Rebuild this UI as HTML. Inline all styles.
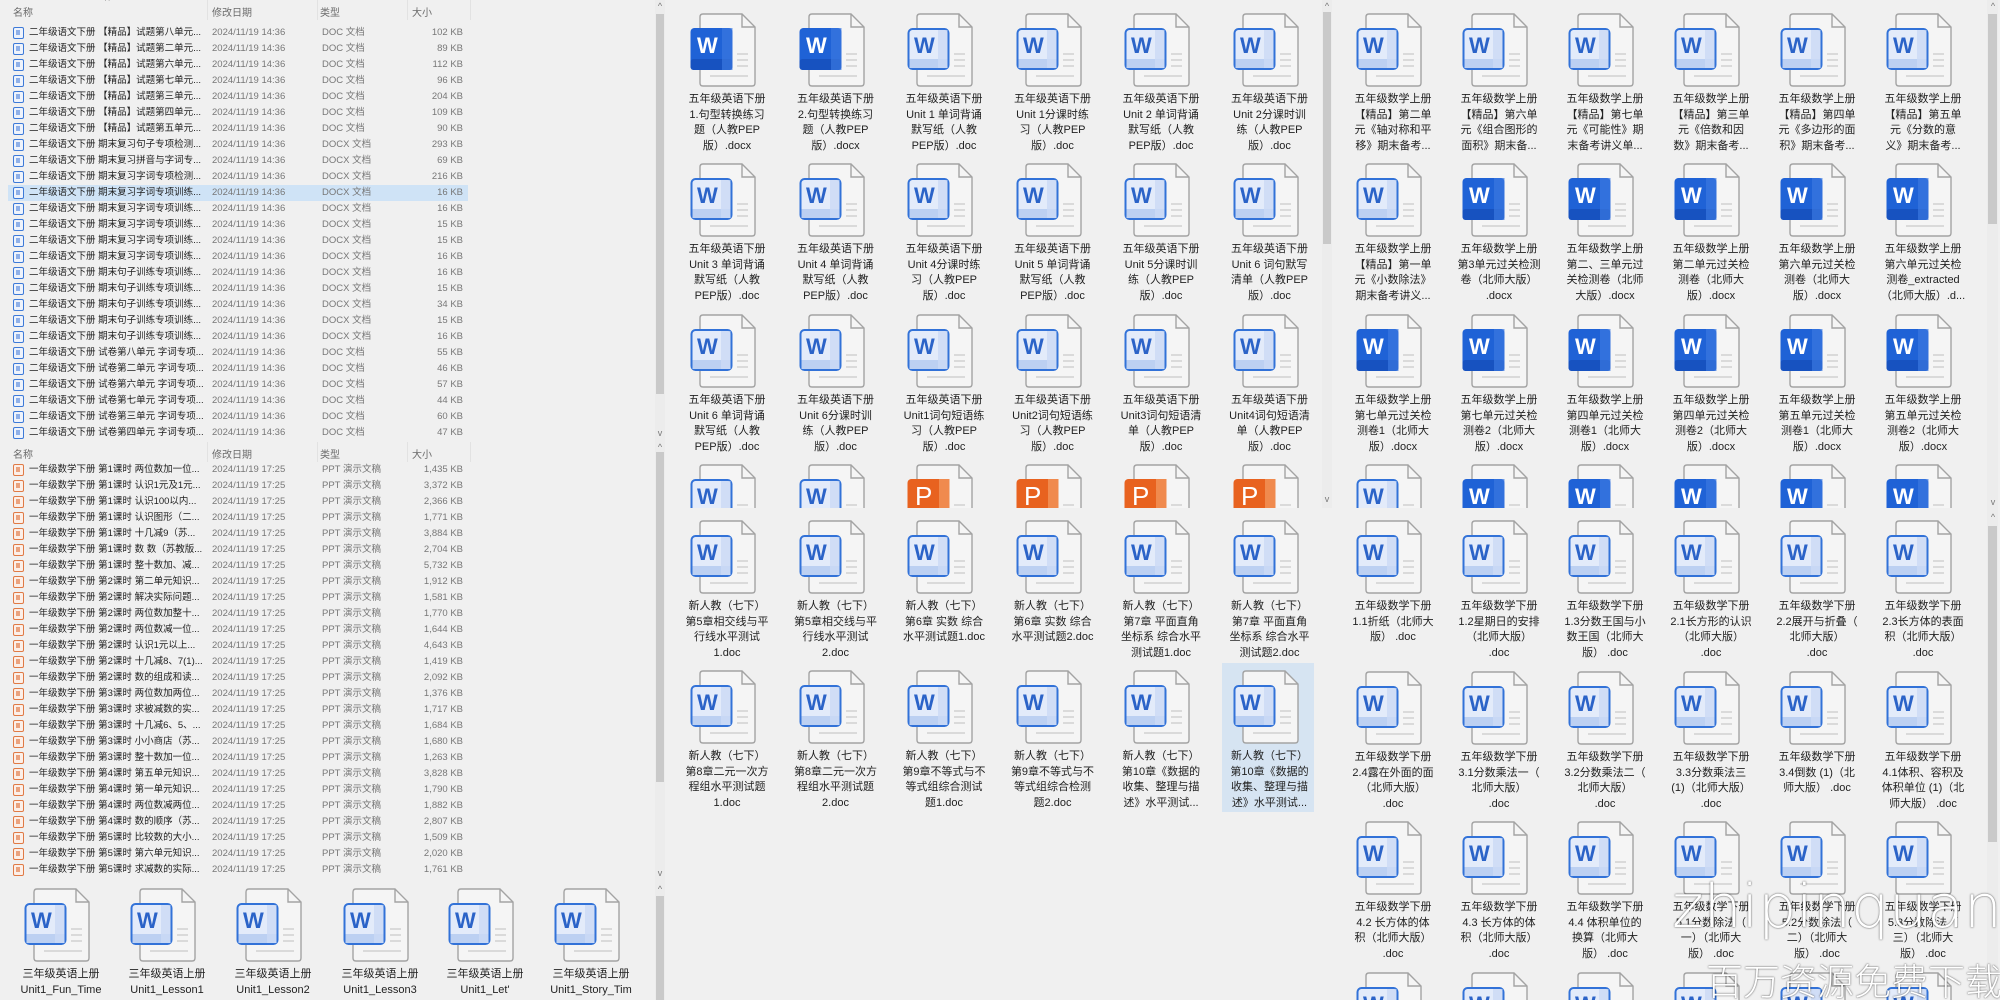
<!DOCTYPE html>
<html style="overflow:hidden;width:2000px;height:1000px"><head><meta charset="utf-8">
<style>
*{margin:0;padding:0;box-sizing:border-box}
body{width:2000px;height:1000px;background:#f0f0f0;position:relative;overflow:hidden;font-family:"Liberation Sans","Noto Sans CJK SC",sans-serif;color:#1e1e1e}
.pane{position:absolute;overflow:hidden}
.hd{position:absolute;left:0;width:650px;height:20px;font-size:10px;color:#6a6a6a}
.hd span{position:absolute;top:4px}
.hd i{position:absolute;top:0;width:1px;height:20px;background:#e2e2e2}
.r{position:absolute;left:0;width:600px;height:16px;font-size:9.5px;line-height:16px;white-space:nowrap}
.r .ic{position:absolute;left:13px;top:2px;width:11px;height:12px;border:1.3px solid #3d7ad8;border-radius:2px;background:#eef3fc}
.r .ic:after{content:"";position:absolute;left:2px;top:2px;width:4px;height:5px;background:#8fb0e8}
.r .ic.p{border-color:#e07a45;background:#fcefe8}
.r .ic.p:after{background:#eaa27e}
.r .n{position:absolute;left:29px}
.r .t{position:absolute;left:212px;color:#777}
.r .y{position:absolute;left:322px;color:#777}
.r .s{position:absolute;left:400px;width:63px;text-align:right;color:#777}
.sel{background:#cfe3f6}
.it{position:absolute;width:74px;height:150px}
.it svg{position:absolute;left:0;top:0;width:66px;height:74px}
.it p{position:absolute;left:-21px;top:79px;width:116px;text-align:center;font-size:11px;line-height:15.5px;color:#222;white-space:nowrap}
.sb{position:absolute;background:#ececec}
.th{position:absolute;background:#c9c9c9}
.ar{position:absolute;font-size:9px;color:#777;width:10px;text-align:center;line-height:10px}
.wmbox{position:absolute;left:1600px;top:850px;width:400px;height:150px;overflow:hidden}
.wm1{position:absolute;left:72px;top:22px;font-size:60px;font-family:"DejaVu Sans","Liberation Sans",sans-serif;font-weight:300;color:#fff;text-shadow:0 0 2px rgba(0,0,0,.45),0 0 1px rgba(0,0,0,.5);white-space:nowrap}
.wm2{position:absolute;left:106px;top:102px;font-size:37px;font-family:"Noto Sans CJK SC",sans-serif;font-weight:300;color:#fff;text-shadow:0 0 2px rgba(0,0,0,.45),0 0 1px rgba(0,0,0,.5);white-space:nowrap}
</style></head><body>
<svg width="0" height="0" style="position:absolute;left:0;top:0">
<defs>
<symbol id="pg" viewBox="0 0 66 74">
<path d="M13 1H52L65 14V70Q65 73 62 73H13Q10 73 10 70V4Q10 1 13 1Z" fill="#f5f5f5" stroke="#a3a3a3" stroke-width="1.4"/>
<path d="M52 1V14H65" fill="none" stroke="#a3a3a3" stroke-width="1.4"/>
<path d="M47 41H58M47 47H58M47 53H58M20 63H58" stroke="#dadada" stroke-width="2"/>
</symbol>
<symbol id="wl" viewBox="0 0 66 74">
<use href="#pg"/>
<rect x="1.5" y="16" width="40" height="40" rx="4" fill="#e3ebfa" stroke="#3272d8" stroke-width="2"/>
<rect x="2.5" y="46" width="38" height="9" fill="#bcd0f2"/>
<rect x="31" y="17" width="9.5" height="38" fill="#cbdaf5" opacity=".8"/>
<text x="7" y="40" font-family="Liberation Sans,sans-serif" font-weight="bold" font-size="22" fill="#2b63c8">W</text>
</symbol>
<symbol id="ws" viewBox="0 0 66 74">
<use href="#pg"/>
<rect x="0.5" y="15" width="42" height="42" rx="4" fill="#1f62d6"/>
<rect x="0.5" y="46" width="42" height="11" rx="3" fill="#1752c0"/>
<rect x="32" y="15" width="10.5" height="42" fill="#3b78e0" opacity=".7"/>
<text x="7" y="40" font-family="Liberation Sans,sans-serif" font-weight="bold" font-size="22" fill="#fff">W</text>
</symbol>
<symbol id="pp" viewBox="0 0 66 74">
<use href="#pg"/>
<rect x="0.5" y="15" width="42" height="42" rx="4" fill="#e8621f"/>
<rect x="32" y="15" width="10.5" height="42" fill="#f08a4e"/>
<text x="8" y="41" font-family="Liberation Sans,sans-serif" font-size="26" fill="#fff">P</text>
</symbol>
</defs></svg>

<!-- LEFT TOP LIST -->
<div class="pane" style="left:0;top:0;width:653px;height:442px">
<div class="hd" style="top:0"><span style="left:13px">名称</span><span style="left:105px;top:-4px">^</span><span style="left:212px">修改日期</span><span style="left:320px">类型</span><span style="left:412px">大小</span><i style="left:207px"></i><i style="left:317px"></i><i style="left:407px"></i><i style="left:470px"></i></div>
<div class="r" style="top:25px"><i class="ic"></i><span class="n">二年级语文下册 【精品】试题第八单元...</span><span class="t">2024/11/19 14:36</span><span class="y">DOC 文档</span><span class="s">102 KB</span></div>
<div class="r" style="top:41px"><i class="ic"></i><span class="n">二年级语文下册 【精品】试题第二单元...</span><span class="t">2024/11/19 14:36</span><span class="y">DOC 文档</span><span class="s">89 KB</span></div>
<div class="r" style="top:57px"><i class="ic"></i><span class="n">二年级语文下册 【精品】试题第六单元...</span><span class="t">2024/11/19 14:36</span><span class="y">DOC 文档</span><span class="s">112 KB</span></div>
<div class="r" style="top:73px"><i class="ic"></i><span class="n">二年级语文下册 【精品】试题第七单元...</span><span class="t">2024/11/19 14:36</span><span class="y">DOC 文档</span><span class="s">96 KB</span></div>
<div class="r" style="top:89px"><i class="ic"></i><span class="n">二年级语文下册 【精品】试题第三单元...</span><span class="t">2024/11/19 14:36</span><span class="y">DOC 文档</span><span class="s">204 KB</span></div>
<div class="r" style="top:105px"><i class="ic"></i><span class="n">二年级语文下册 【精品】试题第四单元...</span><span class="t">2024/11/19 14:36</span><span class="y">DOC 文档</span><span class="s">109 KB</span></div>
<div class="r" style="top:121px"><i class="ic"></i><span class="n">二年级语文下册 【精品】试题第五单元...</span><span class="t">2024/11/19 14:36</span><span class="y">DOC 文档</span><span class="s">90 KB</span></div>
<div class="r" style="top:137px"><i class="ic"></i><span class="n">二年级语文下册 期末复习句子专项检测...</span><span class="t">2024/11/19 14:36</span><span class="y">DOCX 文档</span><span class="s">293 KB</span></div>
<div class="r" style="top:153px"><i class="ic"></i><span class="n">二年级语文下册 期末复习拼音与字词专...</span><span class="t">2024/11/19 14:36</span><span class="y">DOCX 文档</span><span class="s">69 KB</span></div>
<div class="r" style="top:169px"><i class="ic"></i><span class="n">二年级语文下册 期末复习字词专项检测...</span><span class="t">2024/11/19 14:36</span><span class="y">DOCX 文档</span><span class="s">216 KB</span></div>
<div class="r sel" style="top:185px;left:8px;width:460px"><i class="ic" style="left:5px"></i><span class="n" style="left:21px">二年级语文下册 期末复习字词专项训练...</span><span class="t" style="left:204px">2024/11/19 14:36</span><span class="y" style="left:314px">DOCX 文档</span><span class="s" style="left:392px">16 KB</span></div>
<div class="r" style="top:201px"><i class="ic"></i><span class="n">二年级语文下册 期末复习字词专项训练...</span><span class="t">2024/11/19 14:36</span><span class="y">DOCX 文档</span><span class="s">16 KB</span></div>
<div class="r" style="top:217px"><i class="ic"></i><span class="n">二年级语文下册 期末复习字词专项训练...</span><span class="t">2024/11/19 14:36</span><span class="y">DOCX 文档</span><span class="s">15 KB</span></div>
<div class="r" style="top:233px"><i class="ic"></i><span class="n">二年级语文下册 期末复习字词专项训练...</span><span class="t">2024/11/19 14:36</span><span class="y">DOCX 文档</span><span class="s">15 KB</span></div>
<div class="r" style="top:249px"><i class="ic"></i><span class="n">二年级语文下册 期末复习字词专项训练...</span><span class="t">2024/11/19 14:36</span><span class="y">DOCX 文档</span><span class="s">16 KB</span></div>
<div class="r" style="top:265px"><i class="ic"></i><span class="n">二年级语文下册 期末句子训练专项训练...</span><span class="t">2024/11/19 14:36</span><span class="y">DOCX 文档</span><span class="s">16 KB</span></div>
<div class="r" style="top:281px"><i class="ic"></i><span class="n">二年级语文下册 期末句子训练专项训练...</span><span class="t">2024/11/19 14:36</span><span class="y">DOCX 文档</span><span class="s">15 KB</span></div>
<div class="r" style="top:297px"><i class="ic"></i><span class="n">二年级语文下册 期末句子训练专项训练...</span><span class="t">2024/11/19 14:36</span><span class="y">DOCX 文档</span><span class="s">34 KB</span></div>
<div class="r" style="top:313px"><i class="ic"></i><span class="n">二年级语文下册 期末句子训练专项训练...</span><span class="t">2024/11/19 14:36</span><span class="y">DOCX 文档</span><span class="s">15 KB</span></div>
<div class="r" style="top:329px"><i class="ic"></i><span class="n">二年级语文下册 期末句子训练专项训练...</span><span class="t">2024/11/19 14:36</span><span class="y">DOCX 文档</span><span class="s">16 KB</span></div>
<div class="r" style="top:345px"><i class="ic"></i><span class="n">二年级语文下册 试卷第八单元 字词专项...</span><span class="t">2024/11/19 14:36</span><span class="y">DOC 文档</span><span class="s">55 KB</span></div>
<div class="r" style="top:361px"><i class="ic"></i><span class="n">二年级语文下册 试卷第二单元 字词专项...</span><span class="t">2024/11/19 14:36</span><span class="y">DOC 文档</span><span class="s">46 KB</span></div>
<div class="r" style="top:377px"><i class="ic"></i><span class="n">二年级语文下册 试卷第六单元 字词专项...</span><span class="t">2024/11/19 14:36</span><span class="y">DOC 文档</span><span class="s">57 KB</span></div>
<div class="r" style="top:393px"><i class="ic"></i><span class="n">二年级语文下册 试卷第七单元 字词专项...</span><span class="t">2024/11/19 14:36</span><span class="y">DOC 文档</span><span class="s">44 KB</span></div>
<div class="r" style="top:409px"><i class="ic"></i><span class="n">二年级语文下册 试卷第三单元 字词专项...</span><span class="t">2024/11/19 14:36</span><span class="y">DOC 文档</span><span class="s">60 KB</span></div>
<div class="r" style="top:425px"><i class="ic"></i><span class="n">二年级语文下册 试卷第四单元 字词专项...</span><span class="t">2024/11/19 14:36</span><span class="y">DOC 文档</span><span class="s">47 KB</span></div>
</div>

<!-- LEFT SECOND LIST -->
<div class="pane" style="left:0;top:442px;width:653px;height:438px">
<div class="hd" style="top:0"><span style="left:13px">名称</span><span style="left:105px;top:-6px">^</span><span style="left:212px">修改日期</span><span style="left:320px">类型</span><span style="left:412px">大小</span><i style="left:207px"></i><i style="left:317px"></i><i style="left:407px"></i><i style="left:470px"></i></div>
<div class="r" style="top:20px"><i class="ic p"></i><span class="n">一年级数学下册 第1课时 两位数加一位...</span><span class="t">2024/11/19 17:25</span><span class="y">PPT 演示文稿</span><span class="s">1,435 KB</span></div>
<div class="r" style="top:36px"><i class="ic p"></i><span class="n">一年级数学下册 第1课时 认识1元及1元...</span><span class="t">2024/11/19 17:25</span><span class="y">PPT 演示文稿</span><span class="s">3,372 KB</span></div>
<div class="r" style="top:52px"><i class="ic p"></i><span class="n">一年级数学下册 第1课时 认识100以内...</span><span class="t">2024/11/19 17:25</span><span class="y">PPT 演示文稿</span><span class="s">2,366 KB</span></div>
<div class="r" style="top:68px"><i class="ic p"></i><span class="n">一年级数学下册 第1课时 认识图形（二...</span><span class="t">2024/11/19 17:25</span><span class="y">PPT 演示文稿</span><span class="s">1,771 KB</span></div>
<div class="r" style="top:84px"><i class="ic p"></i><span class="n">一年级数学下册 第1课时 十几减9（苏...</span><span class="t">2024/11/19 17:25</span><span class="y">PPT 演示文稿</span><span class="s">3,884 KB</span></div>
<div class="r" style="top:100px"><i class="ic p"></i><span class="n">一年级数学下册 第1课时 数 数（苏教版...</span><span class="t">2024/11/19 17:25</span><span class="y">PPT 演示文稿</span><span class="s">2,704 KB</span></div>
<div class="r" style="top:116px"><i class="ic p"></i><span class="n">一年级数学下册 第1课时 整十数加、减...</span><span class="t">2024/11/19 17:25</span><span class="y">PPT 演示文稿</span><span class="s">5,732 KB</span></div>
<div class="r" style="top:132px"><i class="ic p"></i><span class="n">一年级数学下册 第2课时 第二单元知识...</span><span class="t">2024/11/19 17:25</span><span class="y">PPT 演示文稿</span><span class="s">1,912 KB</span></div>
<div class="r" style="top:148px"><i class="ic p"></i><span class="n">一年级数学下册 第2课时 解决实际问题...</span><span class="t">2024/11/19 17:25</span><span class="y">PPT 演示文稿</span><span class="s">1,581 KB</span></div>
<div class="r" style="top:164px"><i class="ic p"></i><span class="n">一年级数学下册 第2课时 两位数加整十...</span><span class="t">2024/11/19 17:25</span><span class="y">PPT 演示文稿</span><span class="s">1,770 KB</span></div>
<div class="r" style="top:180px"><i class="ic p"></i><span class="n">一年级数学下册 第2课时 两位数减一位...</span><span class="t">2024/11/19 17:25</span><span class="y">PPT 演示文稿</span><span class="s">1,644 KB</span></div>
<div class="r" style="top:196px"><i class="ic p"></i><span class="n">一年级数学下册 第2课时 认识1元以上...</span><span class="t">2024/11/19 17:25</span><span class="y">PPT 演示文稿</span><span class="s">4,643 KB</span></div>
<div class="r" style="top:212px"><i class="ic p"></i><span class="n">一年级数学下册 第2课时 十几减8、7(1)...</span><span class="t">2024/11/19 17:25</span><span class="y">PPT 演示文稿</span><span class="s">1,419 KB</span></div>
<div class="r" style="top:228px"><i class="ic p"></i><span class="n">一年级数学下册 第2课时 数的组成和读...</span><span class="t">2024/11/19 17:25</span><span class="y">PPT 演示文稿</span><span class="s">2,092 KB</span></div>
<div class="r" style="top:244px"><i class="ic p"></i><span class="n">一年级数学下册 第3课时 两位数加两位...</span><span class="t">2024/11/19 17:25</span><span class="y">PPT 演示文稿</span><span class="s">1,376 KB</span></div>
<div class="r" style="top:260px"><i class="ic p"></i><span class="n">一年级数学下册 第3课时 求被减数的实...</span><span class="t">2024/11/19 17:25</span><span class="y">PPT 演示文稿</span><span class="s">1,717 KB</span></div>
<div class="r" style="top:276px"><i class="ic p"></i><span class="n">一年级数学下册 第3课时 十几减6、5、...</span><span class="t">2024/11/19 17:25</span><span class="y">PPT 演示文稿</span><span class="s">1,684 KB</span></div>
<div class="r" style="top:292px"><i class="ic p"></i><span class="n">一年级数学下册 第3课时 小小商店（苏...</span><span class="t">2024/11/19 17:25</span><span class="y">PPT 演示文稿</span><span class="s">1,680 KB</span></div>
<div class="r" style="top:308px"><i class="ic p"></i><span class="n">一年级数学下册 第3课时 整十数加一位...</span><span class="t">2024/11/19 17:25</span><span class="y">PPT 演示文稿</span><span class="s">1,263 KB</span></div>
<div class="r" style="top:324px"><i class="ic p"></i><span class="n">一年级数学下册 第4课时 第五单元知识...</span><span class="t">2024/11/19 17:25</span><span class="y">PPT 演示文稿</span><span class="s">3,828 KB</span></div>
<div class="r" style="top:340px"><i class="ic p"></i><span class="n">一年级数学下册 第4课时 第一单元知识...</span><span class="t">2024/11/19 17:25</span><span class="y">PPT 演示文稿</span><span class="s">1,790 KB</span></div>
<div class="r" style="top:356px"><i class="ic p"></i><span class="n">一年级数学下册 第4课时 两位数减两位...</span><span class="t">2024/11/19 17:25</span><span class="y">PPT 演示文稿</span><span class="s">1,882 KB</span></div>
<div class="r" style="top:372px"><i class="ic p"></i><span class="n">一年级数学下册 第4课时 数的顺序（苏...</span><span class="t">2024/11/19 17:25</span><span class="y">PPT 演示文稿</span><span class="s">2,807 KB</span></div>
<div class="r" style="top:388px"><i class="ic p"></i><span class="n">一年级数学下册 第5课时 比较数的大小...</span><span class="t">2024/11/19 17:25</span><span class="y">PPT 演示文稿</span><span class="s">1,509 KB</span></div>
<div class="r" style="top:404px"><i class="ic p"></i><span class="n">一年级数学下册 第5课时 第六单元知识...</span><span class="t">2024/11/19 17:25</span><span class="y">PPT 演示文稿</span><span class="s">2,020 KB</span></div>
<div class="r" style="top:420px"><i class="ic p"></i><span class="n">一年级数学下册 第5课时 求减数的实际...</span><span class="t">2024/11/19 17:25</span><span class="y">PPT 演示文稿</span><span class="s">1,761 KB</span></div>
</div>

<!-- LEFT BOTTOM ICONS -->
<div class="pane" style="left:0;top:880px;width:653px;height:120px">
<div class="it" style="left:24px;top:8px"><svg><use href="#wl"/></svg><p>三年级英语上册<br>Unit1_Fun_Time</p></div>
<div class="it" style="left:130px;top:8px"><svg><use href="#wl"/></svg><p>三年级英语上册<br>Unit1_Lesson1</p></div>
<div class="it" style="left:236px;top:8px"><svg><use href="#wl"/></svg><p>三年级英语上册<br>Unit1_Lesson2</p></div>
<div class="it" style="left:343px;top:8px"><svg><use href="#wl"/></svg><p>三年级英语上册<br>Unit1_Lesson3</p></div>
<div class="it" style="left:448px;top:8px"><svg><use href="#wl"/></svg><p>三年级英语上册<br>Unit1_Let'</p></div>
<div class="it" style="left:554px;top:8px"><svg><use href="#wl"/></svg><p>三年级英语上册<br>Unit1_Story_Tim</p></div>
</div>

<!-- left scrollbars -->
<div class="sb" style="left:655px;top:0;width:10px;height:1000px"></div>
<div class="th" style="left:656px;top:14px;width:8px;height:380px"></div>
<div class="ar" style="left:655px;top:1px">^</div>
<div class="ar" style="left:655px;top:428px">v</div>
<div class="ar" style="left:655px;top:442px">^</div>
<div class="th" style="left:656px;top:452px;width:8px;height:330px"></div>
<div class="ar" style="left:655px;top:868px">v</div>
<div class="ar" style="left:655px;top:884px">^</div>
<div class="th" style="left:656px;top:896px;width:8px;height:104px"></div>

<!-- MIDDLE TOP -->
<div class="pane" style="left:670px;top:0;width:650px;height:508px">
<div class="it" style="left:20px;top:13px"><svg><use href="#ws"/></svg><p>五年级英语下册<br>1.句型转换练习<br>题（人教PEP<br>版）.docx</p></div>
<div class="it" style="left:128.5px;top:13px"><svg><use href="#ws"/></svg><p>五年级英语下册<br>2.句型转换练习<br>题（人教PEP<br>版）.docx</p></div>
<div class="it" style="left:237px;top:13px"><svg><use href="#wl"/></svg><p>五年级英语下册<br>Unit 1 单词背诵<br>默写纸（人教<br>PEP版）.doc</p></div>
<div class="it" style="left:345.5px;top:13px"><svg><use href="#wl"/></svg><p>五年级英语下册<br>Unit 1分课时练<br>习（人教PEP<br>版）.doc</p></div>
<div class="it" style="left:454px;top:13px"><svg><use href="#wl"/></svg><p>五年级英语下册<br>Unit 2 单词背诵<br>默写纸（人教<br>PEP版）.doc</p></div>
<div class="it" style="left:562.5px;top:13px"><svg><use href="#wl"/></svg><p>五年级英语下册<br>Unit 2分课时训<br>练（人教PEP<br>版）.doc</p></div>

<div class="it" style="left:20px;top:163px"><svg><use href="#wl"/></svg><p>五年级英语下册<br>Unit 3 单词背诵<br>默写纸（人教<br>PEP版）.doc</p></div>
<div class="it" style="left:128.5px;top:163px"><svg><use href="#wl"/></svg><p>五年级英语下册<br>Unit 4 单词背诵<br>默写纸（人教<br>PEP版）.doc</p></div>
<div class="it" style="left:237px;top:163px"><svg><use href="#wl"/></svg><p>五年级英语下册<br>Unit 4分课时练<br>习（人教PEP<br>版）.doc</p></div>
<div class="it" style="left:345.5px;top:163px"><svg><use href="#wl"/></svg><p>五年级英语下册<br>Unit 5 单词背诵<br>默写纸（人教<br>PEP版）.doc</p></div>
<div class="it" style="left:454px;top:163px"><svg><use href="#wl"/></svg><p>五年级英语下册<br>Unit 5分课时训<br>练（人教PEP<br>版）.doc</p></div>
<div class="it" style="left:562.5px;top:163px"><svg><use href="#wl"/></svg><p>五年级英语下册<br>Unit 6 词句默写<br>清单（人教PEP<br>版）.doc</p></div>

<div class="it" style="left:20px;top:314px"><svg><use href="#wl"/></svg><p>五年级英语下册<br>Unit 6 单词背诵<br>默写纸（人教<br>PEP版）.doc</p></div>
<div class="it" style="left:128.5px;top:314px"><svg><use href="#wl"/></svg><p>五年级英语下册<br>Unit 6分课时训<br>练（人教PEP<br>版）.doc</p></div>
<div class="it" style="left:237px;top:314px"><svg><use href="#wl"/></svg><p>五年级英语下册<br>Unit1词句短语练<br>习（人教PEP<br>版）.doc</p></div>
<div class="it" style="left:345.5px;top:314px"><svg><use href="#wl"/></svg><p>五年级英语下册<br>Unit2词句短语练<br>习（人教PEP<br>版）.doc</p></div>
<div class="it" style="left:454px;top:314px"><svg><use href="#wl"/></svg><p>五年级英语下册<br>Unit3词句短语清<br>单（人教PEP<br>版）.doc</p></div>
<div class="it" style="left:562.5px;top:314px"><svg><use href="#wl"/></svg><p>五年级英语下册<br>Unit4词句短语清<br>单（人教PEP<br>版）.doc</p></div>

<div class="it" style="left:20px;top:464px"><svg><use href="#wl"/></svg></div>
<div class="it" style="left:128.5px;top:464px"><svg><use href="#wl"/></svg></div>
<div class="it" style="left:237px;top:464px"><svg><use href="#pp"/></svg></div>
<div class="it" style="left:345.5px;top:464px"><svg><use href="#pp"/></svg></div>
<div class="it" style="left:454px;top:464px"><svg><use href="#pp"/></svg></div>
<div class="it" style="left:562.5px;top:464px"><svg><use href="#pp"/></svg></div>
</div>

<!-- MIDDLE BOTTOM -->
<div class="pane" style="left:670px;top:512px;width:650px;height:488px">
<div style="position:absolute;left:552px;top:151px;width:92px;height:149px;background:#d6e4f2"></div>
<div class="it" style="left:20px;top:8px"><svg><use href="#wl"/></svg><p>新人教（七下）<br>第5章相交线与平<br>行线水平测试<br>1.doc</p></div>
<div class="it" style="left:128.5px;top:8px"><svg><use href="#wl"/></svg><p>新人教（七下）<br>第5章相交线与平<br>行线水平测试<br>2.doc</p></div>
<div class="it" style="left:237px;top:8px"><svg><use href="#wl"/></svg><p>新人教（七下）<br>第6章 实数 综合<br>水平测试题1.doc</p></div>
<div class="it" style="left:345.5px;top:8px"><svg><use href="#wl"/></svg><p>新人教（七下）<br>第6章 实数 综合<br>水平测试题2.doc</p></div>
<div class="it" style="left:454px;top:8px"><svg><use href="#wl"/></svg><p>新人教（七下）<br>第7章 平面直角<br>坐标系 综合水平<br>测试题1.doc</p></div>
<div class="it" style="left:562.5px;top:8px"><svg><use href="#wl"/></svg><p>新人教（七下）<br>第7章 平面直角<br>坐标系 综合水平<br>测试题2.doc</p></div>

<div class="it" style="left:20px;top:158px"><svg><use href="#wl"/></svg><p>新人教（七下）<br>第8章二元一次方<br>程组水平测试题<br>1.doc</p></div>
<div class="it" style="left:128.5px;top:158px"><svg><use href="#wl"/></svg><p>新人教（七下）<br>第8章二元一次方<br>程组水平测试题<br>2.doc</p></div>
<div class="it" style="left:237px;top:158px"><svg><use href="#wl"/></svg><p>新人教（七下）<br>第9章不等式与不<br>等式组综合测试<br>题1.doc</p></div>
<div class="it" style="left:345.5px;top:158px"><svg><use href="#wl"/></svg><p>新人教（七下）<br>第9章不等式与不<br>等式组综合检测<br>题2.doc</p></div>
<div class="it" style="left:454px;top:158px"><svg><use href="#wl"/></svg><p>新人教（七下）<br>第10章《数据的<br>收集、整理与描<br>述》水平测试...</p></div>
<div class="it" style="left:562.5px;top:158px"><svg><use href="#wl"/></svg><p>新人教（七下）<br>第10章《数据的<br>收集、整理与描<br>述》水平测试...</p></div>
</div>

<!-- middle top scrollbar -->
<div class="sb" style="left:1322px;top:0;width:10px;height:508px"></div>
<div class="th" style="left:1323px;top:12px;width:8px;height:232px"></div>
<div class="ar" style="left:1322px;top:1px">^</div>
<div class="ar" style="left:1322px;top:494px">v</div>

<!-- RIGHT TOP -->
<div class="pane" style="left:1335px;top:0;width:650px;height:508px">
<div class="it" style="left:21px;top:13px"><svg><use href="#wl"/></svg><p>五年级数学上册<br>【精品】第二单<br>元《轴对称和平<br>移》期末备考...</p></div>
<div class="it" style="left:127px;top:13px"><svg><use href="#wl"/></svg><p>五年级数学上册<br>【精品】第六单<br>元《组合图形的<br>面积》期末备...</p></div>
<div class="it" style="left:233px;top:13px"><svg><use href="#wl"/></svg><p>五年级数学上册<br>【精品】第七单<br>元《可能性》期<br>末备考讲义单...</p></div>
<div class="it" style="left:339px;top:13px"><svg><use href="#wl"/></svg><p>五年级数学上册<br>【精品】第三单<br>元《倍数和因<br>数》期末备考...</p></div>
<div class="it" style="left:445px;top:13px"><svg><use href="#wl"/></svg><p>五年级数学上册<br>【精品】第四单<br>元《多边形的面<br>积》期末备考...</p></div>
<div class="it" style="left:551px;top:13px"><svg><use href="#wl"/></svg><p>五年级数学上册<br>【精品】第五单<br>元《分数的意<br>义》期末备考...</p></div>

<div class="it" style="left:21px;top:163px"><svg><use href="#wl"/></svg><p>五年级数学上册<br>【精品】第一单<br>元《小数除法》<br>期末备考讲义...</p></div>
<div class="it" style="left:127px;top:163px"><svg><use href="#ws"/></svg><p>五年级数学上册<br>第3单元过关检测<br>卷（北师大版）<br>.docx</p></div>
<div class="it" style="left:233px;top:163px"><svg><use href="#ws"/></svg><p>五年级数学上册<br>第二、三单元过<br>关检测卷（北师<br>大版）.docx</p></div>
<div class="it" style="left:339px;top:163px"><svg><use href="#ws"/></svg><p>五年级数学上册<br>第二单元过关检<br>测卷（北师大<br>版）.docx</p></div>
<div class="it" style="left:445px;top:163px"><svg><use href="#ws"/></svg><p>五年级数学上册<br>第六单元过关检<br>测卷（北师大<br>版）.docx</p></div>
<div class="it" style="left:551px;top:163px"><svg><use href="#ws"/></svg><p>五年级数学上册<br>第六单元过关检<br>测卷_extracted<br>（北师大版）.d...</p></div>

<div class="it" style="left:21px;top:314px"><svg><use href="#ws"/></svg><p>五年级数学上册<br>第七单元过关检<br>测卷1（北师大<br>版）.docx</p></div>
<div class="it" style="left:127px;top:314px"><svg><use href="#ws"/></svg><p>五年级数学上册<br>第七单元过关检<br>测卷2（北师大<br>版）.docx</p></div>
<div class="it" style="left:233px;top:314px"><svg><use href="#ws"/></svg><p>五年级数学上册<br>第四单元过关检<br>测卷1（北师大<br>版）.docx</p></div>
<div class="it" style="left:339px;top:314px"><svg><use href="#ws"/></svg><p>五年级数学上册<br>第四单元过关检<br>测卷2（北师大<br>版）.docx</p></div>
<div class="it" style="left:445px;top:314px"><svg><use href="#ws"/></svg><p>五年级数学上册<br>第五单元过关检<br>测卷1（北师大<br>版）.docx</p></div>
<div class="it" style="left:551px;top:314px"><svg><use href="#ws"/></svg><p>五年级数学上册<br>第五单元过关检<br>测卷2（北师大<br>版）.docx</p></div>

<div class="it" style="left:21px;top:464px"><svg><use href="#wl"/></svg></div>
<div class="it" style="left:127px;top:464px"><svg><use href="#ws"/></svg></div>
<div class="it" style="left:233px;top:464px"><svg><use href="#ws"/></svg></div>
<div class="it" style="left:339px;top:464px"><svg><use href="#ws"/></svg></div>
<div class="it" style="left:445px;top:464px"><svg><use href="#ws"/></svg></div>
<div class="it" style="left:551px;top:464px"><svg><use href="#ws"/></svg></div>
</div>

<!-- RIGHT BOTTOM -->
<div class="pane" style="left:1335px;top:512px;width:650px;height:488px">
<div class="it" style="left:21px;top:8px"><svg><use href="#wl"/></svg><p>五年级数学下册<br>1.1折纸（北师大<br>版） .doc</p></div>
<div class="it" style="left:127px;top:8px"><svg><use href="#wl"/></svg><p>五年级数学下册<br>1.2星期日的安排<br>（北师大版）<br>.doc</p></div>
<div class="it" style="left:233px;top:8px"><svg><use href="#wl"/></svg><p>五年级数学下册<br>1.3分数王国与小<br>数王国（北师大<br>版） .doc</p></div>
<div class="it" style="left:339px;top:8px"><svg><use href="#wl"/></svg><p>五年级数学下册<br>2.1长方形的认识<br>（北师大版）<br>.doc</p></div>
<div class="it" style="left:445px;top:8px"><svg><use href="#wl"/></svg><p>五年级数学下册<br>2.2展开与折叠（<br>北师大版）<br>.doc</p></div>
<div class="it" style="left:551px;top:8px"><svg><use href="#wl"/></svg><p>五年级数学下册<br>2.3长方体的表面<br>积（北师大版）<br>.doc</p></div>

<div class="it" style="left:21px;top:159px"><svg><use href="#wl"/></svg><p>五年级数学下册<br>2.4露在外面的面<br>（北师大版）<br>.doc</p></div>
<div class="it" style="left:127px;top:159px"><svg><use href="#wl"/></svg><p>五年级数学下册<br>3.1分数乘法一（<br>北师大版）<br>.doc</p></div>
<div class="it" style="left:233px;top:159px"><svg><use href="#wl"/></svg><p>五年级数学下册<br>3.2分数乘法二（<br>北师大版）<br>.doc</p></div>
<div class="it" style="left:339px;top:159px"><svg><use href="#wl"/></svg><p>五年级数学下册<br>3.3分数乘法三<br>(1)（北师大版）<br>.doc</p></div>
<div class="it" style="left:445px;top:159px"><svg><use href="#wl"/></svg><p>五年级数学下册<br>3.4倒数 (1)（北<br>师大版） .doc</p></div>
<div class="it" style="left:551px;top:159px"><svg><use href="#wl"/></svg><p>五年级数学下册<br>4.1体积、容积及<br>体积单位 (1)（北<br>师大版） .doc</p></div>

<div class="it" style="left:21px;top:309px"><svg><use href="#wl"/></svg><p>五年级数学下册<br>4.2 长方体的体<br>积（北师大版）<br>.doc</p></div>
<div class="it" style="left:127px;top:309px"><svg><use href="#wl"/></svg><p>五年级数学下册<br>4.3 长方体的体<br>积（北师大版）<br>.doc</p></div>
<div class="it" style="left:233px;top:309px"><svg><use href="#wl"/></svg><p>五年级数学下册<br>4.4 体积单位的<br>换算（北师大<br>版） .doc</p></div>
<div class="it" style="left:339px;top:309px"><svg><use href="#wl"/></svg><p>五年级数学下册<br>5.1分数除法（<br>一）（北师大<br>版） .doc</p></div>
<div class="it" style="left:445px;top:309px"><svg><use href="#wl"/></svg><p>五年级数学下册<br>5.2分数除法（<br>二）（北师大<br>版） .doc</p></div>
<div class="it" style="left:551px;top:309px"><svg><use href="#wl"/></svg><p>五年级数学下册<br>5.3分数除法（<br>三）（北师大<br>版） .doc</p></div>

<div class="it" style="left:21px;top:460px"><svg><use href="#wl"/></svg></div>
<div class="it" style="left:127px;top:460px"><svg><use href="#wl"/></svg></div>
<div class="it" style="left:233px;top:460px"><svg><use href="#wl"/></svg></div>
<div class="it" style="left:339px;top:460px"><svg><use href="#wl"/></svg></div>
<div class="it" style="left:445px;top:460px"><svg><use href="#wl"/></svg></div>
<div class="it" style="left:551px;top:460px"><svg><use href="#wl"/></svg></div>
</div>

<!-- right scrollbars -->
<div class="sb" style="left:1987px;top:0;width:11px;height:1000px"></div>
<div class="ar" style="left:1988px;top:1px">^</div>
<div class="th" style="left:1988px;top:14px;width:9px;height:210px"></div>
<div class="ar" style="left:1988px;top:497px">v</div>
<div class="ar" style="left:1988px;top:512px">^</div>
<div class="th" style="left:1988px;top:526px;width:9px;height:316px"></div>

<div class="wmbox"><div class="wm1">zhipinquan.com</div><div class="wm2">百万资源免费下载</div></div>
</body></html>
